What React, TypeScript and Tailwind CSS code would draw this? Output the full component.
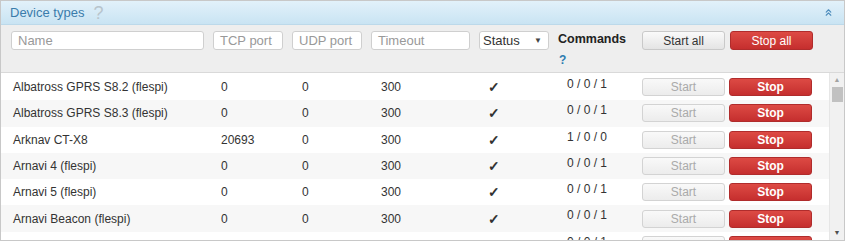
import { ChevronsUp } from "lucide-react";

const rows = [
  { name: "Albatross GPRS S8.2 (flespi)", tcp: "0", udp: "0", timeout: "300", cmd: "0 / 0 / 1" },
  { name: "Albatross GPRS S8.3 (flespi)", tcp: "0", udp: "0", timeout: "300", cmd: "0 / 0 / 1" },
  { name: "Arknav CT-X8", tcp: "20693", udp: "0", timeout: "300", cmd: "1 / 0 / 0" },
  { name: "Arnavi 4 (flespi)", tcp: "0", udp: "0", timeout: "300", cmd: "0 / 0 / 1" },
  { name: "Arnavi 5 (flespi)", tcp: "0", udp: "0", timeout: "300", cmd: "0 / 0 / 1" },
  { name: "Arnavi Beacon (flespi)", tcp: "0", udp: "0", timeout: "300", cmd: "0 / 0 / 1" },
  { name: "Arnavi Integral (flespi)", tcp: "0", udp: "0", timeout: "300", cmd: "0 / 0 / 1" },
];

const cols = "grid grid-cols-[202px_79px_79px_108px_79px_84px_auto] pl-[10px]";

const inputCls =
  "h-[19px] border border-[#cfcfcf] rounded-[3px] bg-white px-[6px] text-[13px] text-[#999] flex items-center";

export default function App() {
  return (
    <div className="w-[845px] h-[241px] border border-[#c8c8c8] bg-white flex flex-col overflow-hidden font-['Liberation_Sans',Arial,sans-serif] text-[12px] text-[#333]">
      {/* title bar */}
      <div className="h-[24px] shrink-0 bg-gradient-to-b from-[#e2f1fa] to-[#c9e4f3] border-b border-[#bcd9ea] flex items-center pl-[9px] pr-[10px]">
        <span className="text-[13px] text-[#3b7cab]">Device types</span>
        <span className="ml-[9px] text-[18px] leading-none text-[#b8c4cc]">?</span>
        <ChevronsUp className="ml-auto w-[11px] h-[11px] text-[#4d8cbc]" strokeWidth={2.5} />
      </div>

      {/* filters */}
      <div className={`${cols} h-[48px] shrink-0 bg-[#eeeeee] border-b border-[#d9d9d9] pt-[6px]`}>
        <div className="pr-[9px]">
          <div className={inputCls}>Name</div>
        </div>
        <div className="pr-[9px]">
          <div className={inputCls}>TCP port</div>
        </div>
        <div className="pr-[9px]">
          <div className={inputCls}>UDP port</div>
        </div>
        <div className="pr-[9px]">
          <div className={inputCls}>Timeout</div>
        </div>
        <div className="pr-[9px]">
          <div className="h-[19px] border border-[#cfcfcf] rounded-[3px] bg-white pl-[3px] pr-[6px] text-[13px] text-[#333] flex items-center justify-between">
            <span>Status</span>
            <span className="text-[8px] text-[#444]">▼</span>
          </div>
        </div>
        <div className="flex flex-col">
          <span className="text-[12.5px] font-bold text-[#222] leading-[18px] mt-[-1px]">Commands</span>
          <span className="text-[12px] font-bold text-[#2d7bb0] mt-[3px] pl-[1px]">?</span>
        </div>
        <div className="flex gap-[5px]">
          <div className="w-[83px] h-[19px] rounded-[3px] border border-[#c9c9c9] bg-gradient-to-b from-[#fafafa] to-[#e4e4e4] flex items-center justify-center text-[12px] text-[#333]">
            Start all
          </div>
          <div className="w-[83px] h-[19px] rounded-[3px] border border-[#b02c2c] bg-gradient-to-b from-[#dd4a44] to-[#c52e2e] flex items-center justify-center text-[12px] text-white">
            Stop all
          </div>
        </div>
      </div>

      {/* list */}
      <div className="flex flex-1 min-h-0">
        <div className="flex-1 overflow-hidden pt-[1px]">
          {rows.map((r, i) => (
            <div
              key={i}
              className={`${cols} h-[26.3px] items-center ${i % 2 === 1 ? "bg-[#f7f7f7]" : "bg-white"}`}
            >
              <div className="pl-[2px] text-[12px]">{r.name}</div>
              <div className="pl-[8px]">{r.tcp}</div>
              <div className="pl-[10px]">{r.udp}</div>
              <div className="pl-[10px]">{r.timeout}</div>
              <div className="pl-[9px] text-[14px] leading-none font-bold">✓</div>
              <div className="pl-[9px] self-start pt-[1px]">{r.cmd}</div>
              <div className="flex gap-[4px]">
                <div className="w-[83px] h-[18px] rounded-[3px] border border-[#d3d3d3] bg-gradient-to-b from-[#f9f9f9] to-[#ececec] flex items-center justify-center text-[12px] text-[#aaa]">
                  Start
                </div>
                <div className="w-[83px] h-[18px] rounded-[3px] border border-[#b02c2c] bg-gradient-to-b from-[#dd4a44] to-[#c52e2e] flex items-center justify-center text-[12px] font-bold text-white">
                  Stop
                </div>
              </div>
            </div>
          ))}
        </div>
        {/* scrollbar */}
        <div className="w-[15px] shrink-0 bg-[#f1f1f1] border-l border-[#e6e6e6] flex flex-col items-center">
          <span className="text-[7px] text-[#a3a3a3] mt-[3px] leading-none">▲</span>
          <div className="w-[11px] h-[15px] bg-[#c1c1c1] mt-[4px]" />
          <span className="mt-auto mb-[4px] text-[7px] text-[#505050] leading-none">▼</span>
        </div>
      </div>
    </div>
  );
}
